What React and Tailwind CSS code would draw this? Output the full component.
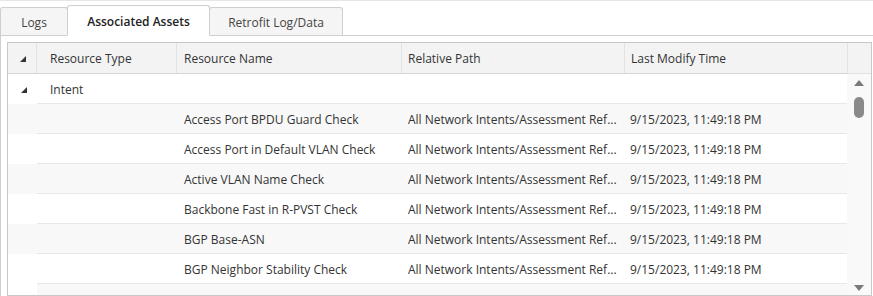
const ROWS = [
  'Access Port BPDU Guard Check',
  'Access Port in Default VLAN Check',
  'Active VLAN Name Check',
  'Backbone Fast in R-PVST Check',
  'BGP Base-ASN',
  'BGP Neighbor Stability Check',
];

function Corner({ color = '#333' }) {
  return (
    <svg width="6" height="6" viewBox="0 0 6 6">
      <path d="M6 0 L6 6 L0 6 Z" fill={color} />
    </svg>
  );
}

function Tab({ label, active, className }) {
  return (
    <div
      className={`flex items-center justify-center pt-[2px] border border-[#cfcfcf] rounded-t-[3px] ${
        active
          ? 'h-[31px] bg-white border-b-white -mb-px font-semibold text-[#222] z-10'
          : 'h-[28px] bg-[#f5f5f5] border-b-0 text-[#444]'
      } ${className}`}
    >
      {label}
    </div>
  );
}

export default function App() {
  return (
    <div className="w-[873px] h-[296px] bg-white overflow-hidden font-['Open_Sans',sans-serif] text-[12px] text-[#333] border-t border-[#e6e6e6]">
      <div className="flex items-end h-[35px] border-b border-[#cfcfcf]">
        <Tab label="Logs" className="w-[68px]" />
        <Tab label="Associated Assets" active className="w-[143px] -ml-px" />
        <Tab label="Retrofit Log/Data" className="w-[134px] -ml-px" />
      </div>

      <div className="border-l border-[#cfcfcf] pl-[6px] pt-[6px] h-[260px]">
        <div className="w-[865px] h-[254px] border border-[#c8c8c8] flex">
          <div className="w-[839px] flex flex-col">
            <div className="flex h-[31px] bg-[#f3f3f3] border-b border-[#d6d6d6]">
              <div className="w-[29px] flex items-center justify-center border-r border-[#e2e2e2] pl-[2px] pt-[2px]">
                <Corner />
              </div>
              <div className="w-[140px] flex items-center pl-[13px] pt-[2px] border-r border-[#e2e2e2]">Resource Type</div>
              <div className="w-[225px] flex items-center pl-[7px] pt-[2px] border-r border-[#e2e2e2]">Resource Name</div>
              <div className="w-[223px] flex items-center pl-[6px] pt-[2px] border-r border-[#e2e2e2]">Relative Path</div>
              <div className="w-[222px] flex items-center pl-[6px] pt-[2px]">Last Modify Time</div>
            </div>

            <div className="flex h-[30px]">
              <div className="w-[29px] flex items-center justify-center pl-[2px] pt-[2px]">
                <Corner />
              </div>
              <div className="flex-1 flex items-center pl-[13px] pt-[2px] border-b border-[#e8e8e8]">Intent</div>
            </div>

            {ROWS.map((name, i) => (
              <div key={name} className={`flex h-[30px] ${i % 2 === 0 ? 'bg-[#f8f8f8]' : 'bg-white'}`}>
                <div className="w-[29px]" />
                <div className="flex-1 flex pt-[2px] border-b border-[#e8e8e8]">
                  <div className="w-[140px]" />
                  <div className="w-[225px] flex items-center pl-[7px] whitespace-nowrap">{name}</div>
                  <div className="w-[223px] flex items-center pl-[6px] whitespace-nowrap">All Network Intents/Assessment Ref...</div>
                  <div className="w-[222px] flex items-center pl-[5px] whitespace-nowrap">9/15/2023, 11:49:18 PM</div>
                </div>
              </div>
            ))}

            <div className="flex flex-1">
              <div className="w-[29px]" />
              <div className="flex-1 bg-[#f8f8f8]" />
            </div>
          </div>

          <div className="flex-1 flex flex-col">
            <div className="h-[31px] bg-[#f3f3f3] border-b border-[#d6d6d6] border-l border-[#e2e2e2]" />
            <div className="flex-1 bg-[#f9f9f9] flex flex-col items-center pt-[6px] pb-[4px]">
              <svg width="10" height="6" viewBox="0 0 10 6">
                <path d="M5 0 L10 6 L0 6 Z" fill="#7a7a7a" />
              </svg>
              <div className="mt-[11px] w-[10px] h-[21px] rounded-full bg-[#8a8a8a]" />
              <div className="flex-1" />
              <svg width="10" height="6" viewBox="0 0 10 6">
                <path d="M0 0 L10 0 L5 6 Z" fill="#7a7a7a" />
              </svg>
            </div>
          </div>
        </div>
      </div>
    </div>
  );
}
